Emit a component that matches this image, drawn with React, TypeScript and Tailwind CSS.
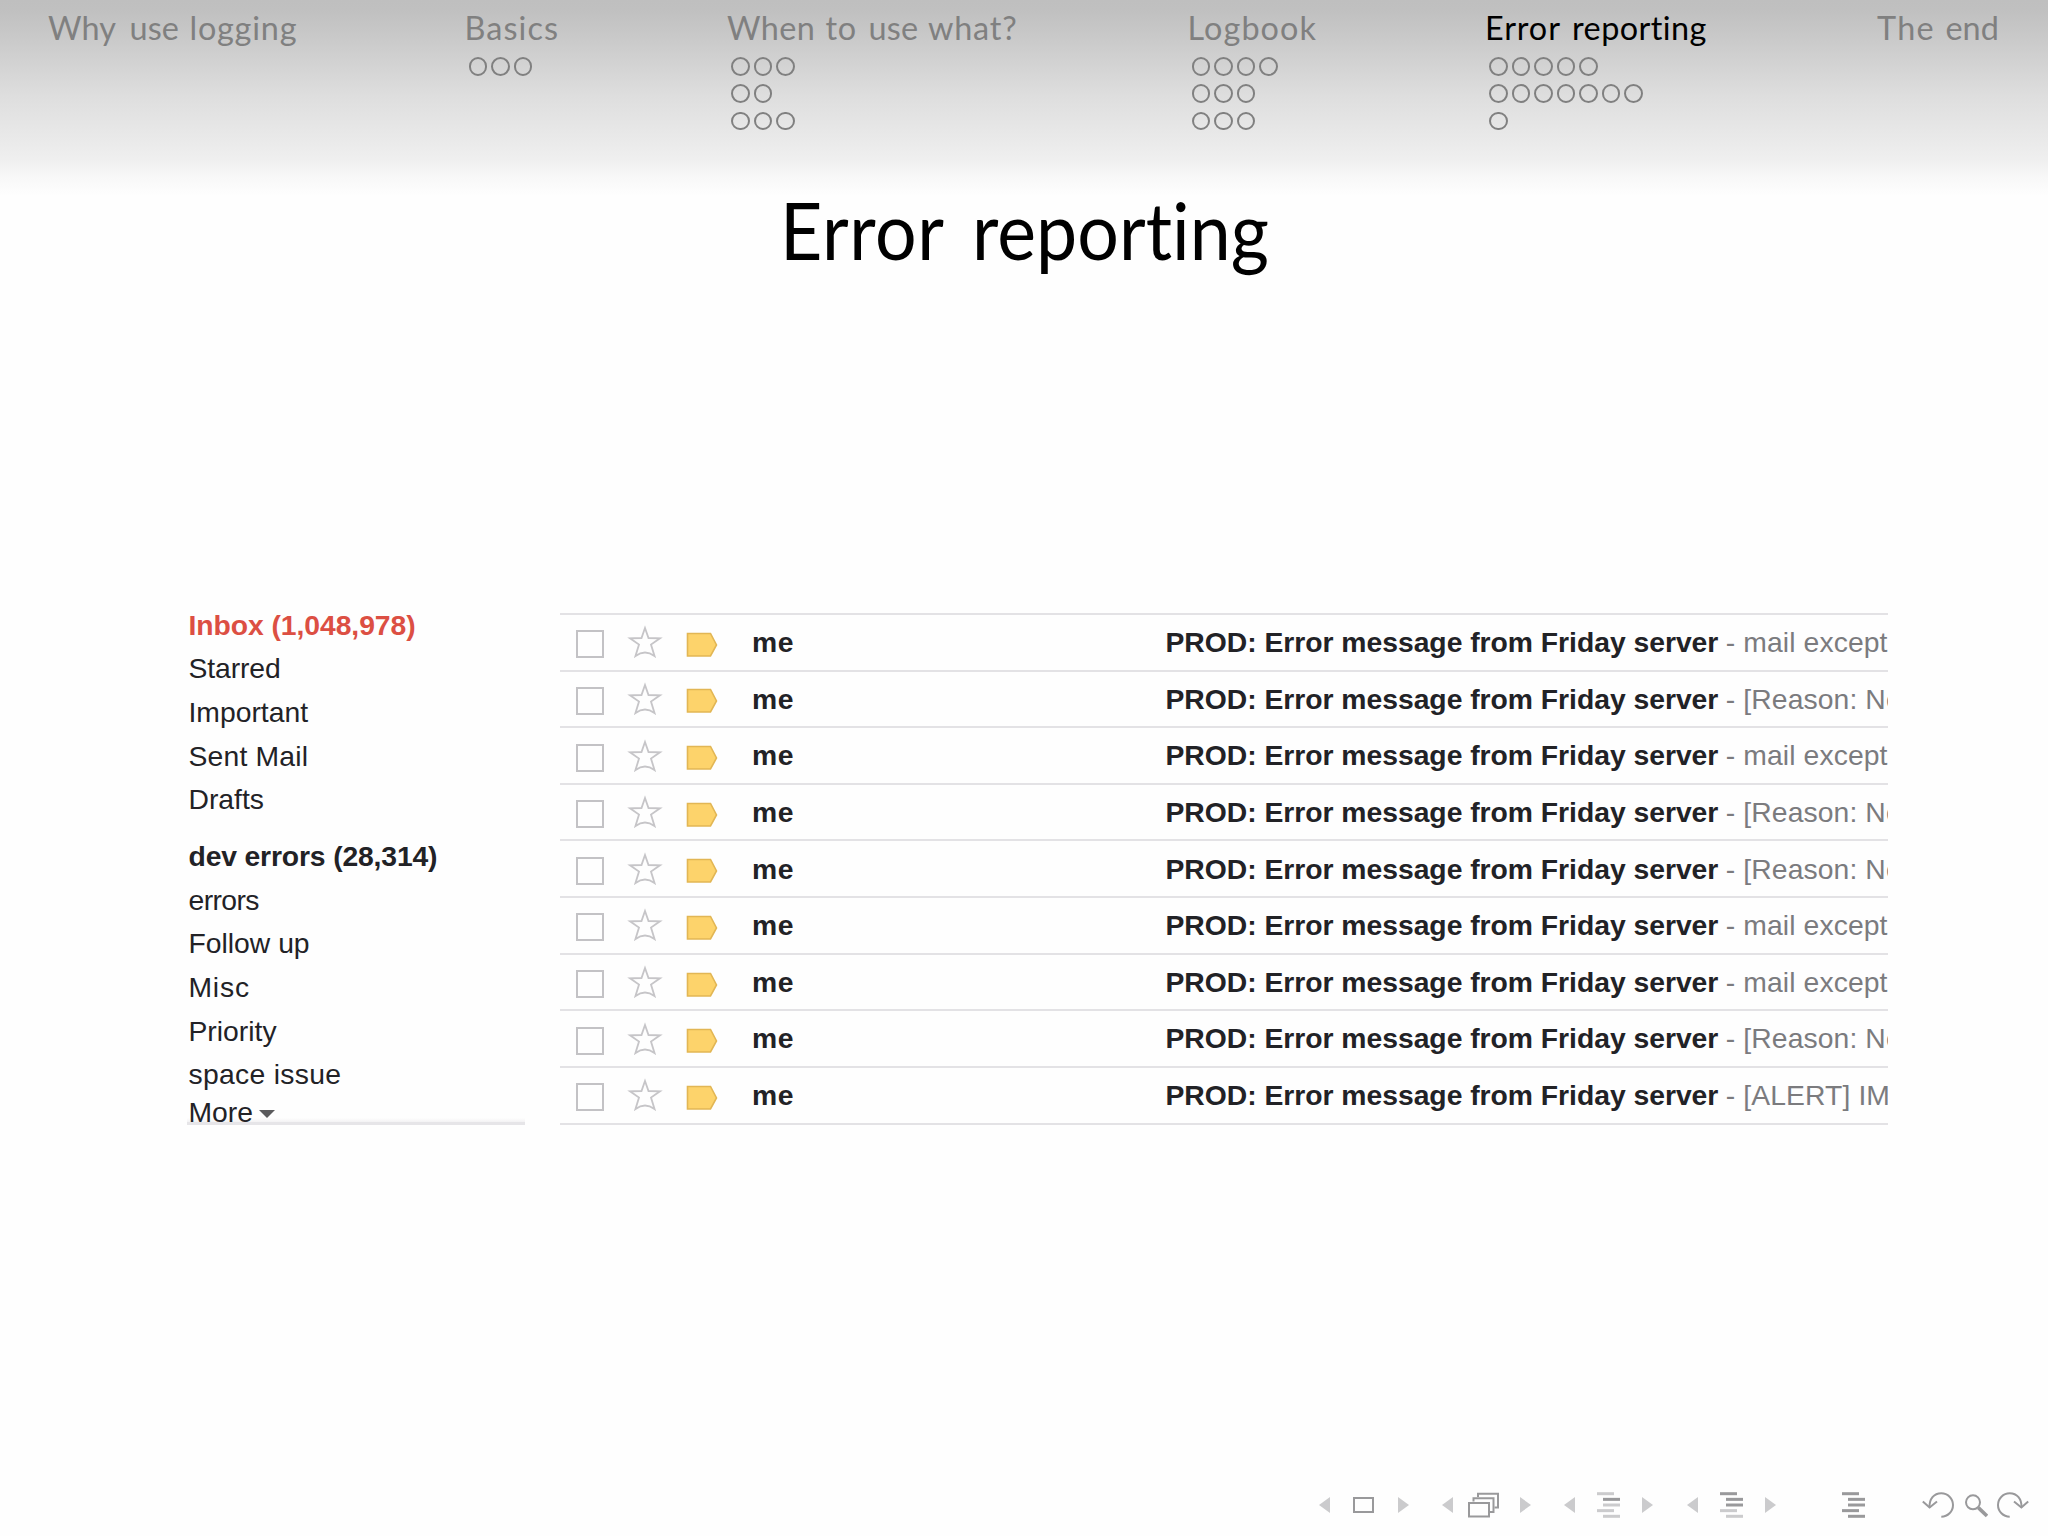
import type { ReactNode } from "react";

type Word = { text: string; width: number; tracking: number };
type Section = { width: number; words: Word[]; dots: number[]; active?: boolean };

const sections: Section[] = [
  {
    width: 416.5,
    words: [
      { text: "Why", width: 81.5, tracking: 0.1 },
      { text: "use", width: 60, tracking: 0.1 },
      { text: "logging", width: 120, tracking: 0.8 },
    ],
    dots: [],
  },
  { width: 262.5, words: [{ text: "Basics", width: 120, tracking: 1.1 }], dots: [3] },
  {
    width: 460.5,
    words: [
      { text: "When", width: 98.5, tracking: 0.4 },
      { text: "to", width: 43, tracking: 0.6 },
      { text: "use", width: 59.5, tracking: 0.2 },
      { text: "what?", width: 110, tracking: 0.8 },
    ],
    dots: [3, 2, 3],
  },
  { width: 297.5, words: [{ text: "Logbook", width: 160, tracking: 1.1 }], dots: [4, 3, 3] },
  {
    width: 392,
    words: [
      { text: "Error", width: 87, tracking: 0.9 },
      { text: "reporting", width: 160, tracking: 0.45 },
    ],
    dots: [5, 7, 1],
    active: true,
  },
  {
    width: 140,
    words: [
      { text: "The", width: 68.5, tracking: 1.3 },
      { text: "end", width: 60, tracking: 0 },
    ],
    dots: [],
  },
];

type Label = { text: string; tracking: number; className?: string };

const folders: Label[] = [
  { text: "Inbox (1,048,978)", tracking: -0.06, className: "font-bold text-[#dc4f43]" },
  { text: "Starred", tracking: -0.1 },
  { text: "Important", tracking: 0 },
  { text: "Sent Mail", tracking: 0.2 },
  { text: "Drafts", tracking: 0 },
];

const labels: Label[] = [
  { text: "dev errors (28,314)", tracking: -0.15, className: "font-bold" },
  { text: "errors", tracking: -0.6 },
  { text: "Follow up", tracking: 0 },
  { text: "Misc", tracking: 0.8 },
  { text: "Priority", tracking: 0 },
  { text: "space issue", tracking: 0.3 },
];

const EXCEPTION = "mail except";
const REASON = "[Reason: No";
const snippets = [EXCEPTION, REASON, EXCEPTION, REASON, REASON, EXCEPTION, EXCEPTION, REASON, "[ALERT] IM"];

function HeaderSection({ section }: { section: Section }) {
  return (
    <div className="shrink-0" style={{ width: section.width }}>
      <div className={section.active ? "flex text-black" : "flex text-[#808080]"}>
        {section.words.map((w) => (
          <span key={w.text} className="shrink-0 whitespace-nowrap" style={{ width: w.width, letterSpacing: w.tracking }}>
            {w.text}
          </span>
        ))}
      </div>
      <div className="ml-[4px] mt-px flex flex-col gap-[8.9px]">
        {section.dots.map((count, row) => (
          <div key={row} className="flex gap-[4px]">
            {Array.from({ length: count }, (_, i) => (
              <span key={i} className="size-[18.5px] rounded-full border-2 border-[#808080]" />
            ))}
          </div>
        ))}
      </div>
    </div>
  );
}

function FolderRow({ label }: { label: Label }) {
  return (
    <div className={label.className} style={{ letterSpacing: label.tracking }}>
      {label.text}
    </div>
  );
}

function MailRow({ snippet }: { snippet: string }) {
  return (
    <div className="flex h-[56.63px] items-center overflow-hidden whitespace-nowrap border-t-2 border-[#e3e2e5] leading-[54.6px]">
      <span className="ml-4 mt-[4px] size-[28px] shrink-0 border-2 border-[#c3c2c5]" />
      <svg className="ml-[23px] h-[36px] w-[36px] shrink-0" viewBox="0 0 36 36" fill="none" stroke="#c6c5c8" strokeWidth="1.8">
        <path d="M18 4 L21.5 14 L33 14.3 L24 20.6 L27.5 32 Q18 25 8.5 32 L12 20.6 L3 14.3 L14.5 14 Z" />
      </svg>
      <svg className="ml-[22.5px] mt-[5px] h-[26px] w-[32px] shrink-0" viewBox="0 0 32 26">
        <path d="M1.5 1.5 H24.5 L30.5 13 L24.5 24 H1.5 Z" fill="#fdd36b" stroke="#e2b654" strokeWidth="1.6" />
      </svg>
      <span className="ml-[34.5px] w-[413.5px] shrink-0 font-bold tracking-[0.6px]">me</span>
      <span className="font-bold tracking-[-0.02px]">PROD: Error message from Friday server</span>
      <span className="ml-[7.5px] tracking-[0.1px] text-[#7b7b7e]">- {snippet}</span>
    </div>
  );
}

function Arrow({ dir, gap }: { dir: "left" | "right"; gap: string }) {
  return (
    <svg className={`${gap} h-[28px] w-[11px] shrink-0`} viewBox="0 0 11 28">
      <path d={dir === "left" ? "M11 6 V22 L0 14 Z" : "M0 6 V22 L11 14 Z"} fill="#cbcbcd" />
    </svg>
  );
}

function Lines({ dark, gap }: { dark: boolean[]; gap: string }) {
  const offsets = [0, 6, 6, 0, 6];
  return (
    <svg className={`${gap} h-[28px] w-[23px] shrink-0`} viewBox="0 0 23 28">
      {offsets.map((x, i) => (
        <rect key={i} x={x} y={1.2 + i * 5.65} width="17" height="3" fill={dark[i] ? "#99999b" : "#cbcbcd"} />
      ))}
    </svg>
  );
}

function Glyph({ className, viewBox, children }: { className: string; viewBox: string; children: ReactNode }) {
  return (
    <svg className={`${className} h-[28px] shrink-0`} viewBox={viewBox} fill="none" stroke="#99999b" strokeWidth="2">
      {children}
    </svg>
  );
}

function SlideControls() {
  return (
    <div className="flex h-[45px] items-start pl-[1318.5px]">
      <Arrow dir="left" gap="ml-0" />
      <Glyph className="ml-[23px] w-[21px]" viewBox="0 0 21 28">
        <rect x="1" y="7" width="19" height="14" />
      </Glyph>
      <Arrow dir="right" gap="ml-[24px]" />
      <Arrow dir="left" gap="ml-[33px]" />
      <Glyph className="ml-[15px] w-[31px]" viewBox="0 0 31 28">
        <path d="M10 6 V2.7 H30 V16.5 H26.5" />
        <path d="M5.5 10.5 V7.3 H25.5 V21 H21.5" />
        <rect x="1" y="12" width="20" height="13.5" />
      </Glyph>
      <Arrow dir="right" gap="ml-[21px]" />
      <Arrow dir="left" gap="ml-[33px]" />
      <Lines gap="ml-[22px]" dark={[false, true, false, false, false]} />
      <Arrow dir="right" gap="ml-[22.5px]" />
      <Arrow dir="left" gap="ml-[33.5px]" />
      <Lines gap="ml-[22px]" dark={[true, true, true, false, false]} />
      <Arrow dir="right" gap="ml-[22.5px]" />
      <Lines gap="ml-[66px]" dark={[true, true, true, true, true]} />
      <Glyph className="ml-[57px] w-[32px]" viewBox="0 0 32 28">
        <path d="M7.6 16.5 C7 8 12 2.3 19.3 2.3 A11.7 11.7 0 0 1 19.3 25.7" />
        <path d="M0.8 10.5 L7.6 16.5 L15 10.5" />
      </Glyph>
      <Glyph className="ml-[10.5px] w-[23px]" viewBox="0 0 23 28">
        <circle cx="8" cy="11.3" r="7" />
        <path d="M13.3 16.6 L22 25" strokeWidth="3.6" />
      </Glyph>
      <Glyph className="ml-[9px] w-[32px]" viewBox="0 0 32 28">
        <path d="M24.4 16.5 C25 8 20 2.3 12.7 2.3 A11.7 11.7 0 0 0 12.7 25.7" />
        <path d="M31.2 10.5 L24.4 16.5 L17 10.5" />
      </Glyph>
    </div>
  );
}

export default function App() {
  return (
    <div className="flex h-[1536px] w-[2048px] flex-col overflow-hidden bg-[#fefefe] font-['Liberation_Sans',sans-serif] text-[28.3px] text-[#222226]">
      <header className="flex h-[196px] shrink-0 bg-[linear-gradient(to_bottom,#bfbfbf_0px,#c0c0c0_10px,#cacaca_40px,#dedede_96px,#ebebeb_145px,#f0f0f0_162px,#f8f8f8_178px,#fefefe_196px)] pl-[48px] font-['Lato',sans-serif] text-[32.4px] leading-[56px]">
        {sections.map((s, i) => (
          <HeaderSection key={i} section={s} />
        ))}
      </header>

      <h1 className="flex h-[68px] shrink-0 pl-[780px] font-['Lato',sans-serif] text-[79px] leading-[68px] text-black">
        <span className="w-[192px] origin-left scale-x-[0.93] tracking-[0.6px]">Error</span>
        <span className="origin-left scale-x-[0.93] tracking-[0.01px]">reporting</span>
      </h1>

      <main className="mt-[339.8px] flex">
        <aside className="ml-[187px] w-[338px] shrink-0 whitespace-nowrap leading-[43.65px]">
          <div className="pl-[1.5px]">
            {folders.map((f) => (
              <FolderRow key={f.text} label={f} />
            ))}
          </div>
          <div className="pl-[1.5px] pt-[12.9px]">
            {labels.map((l) => (
              <FolderRow key={l.text} label={l} />
            ))}
          </div>
          <div className="flex h-[28.5px] items-end border-b-[3px] border-[#e6e5e8] bg-[linear-gradient(to_bottom,transparent_21px,#f3f2f4_25px)] pl-[1.5px]">
            <span className="h-[26px] leading-[33.8px]">More</span>
            <svg className="mb-[4px] ml-[6px] h-[8px] w-[16px]" viewBox="0 0 16 8">
              <path d="M0 0 H16 L8 8 Z" fill="#5b5b5d" />
            </svg>
          </div>
        </aside>

        <section className="ml-[35px] mt-[9.2px] w-[1328px] shrink-0 border-b-2 border-[#e3e2e5]">
          {snippets.map((s, i) => (
            <MailRow key={i} snippet={s} />
          ))}
        </section>
      </main>

      <footer className="mt-auto">
        <SlideControls />
      </footer>
    </div>
  );
}
